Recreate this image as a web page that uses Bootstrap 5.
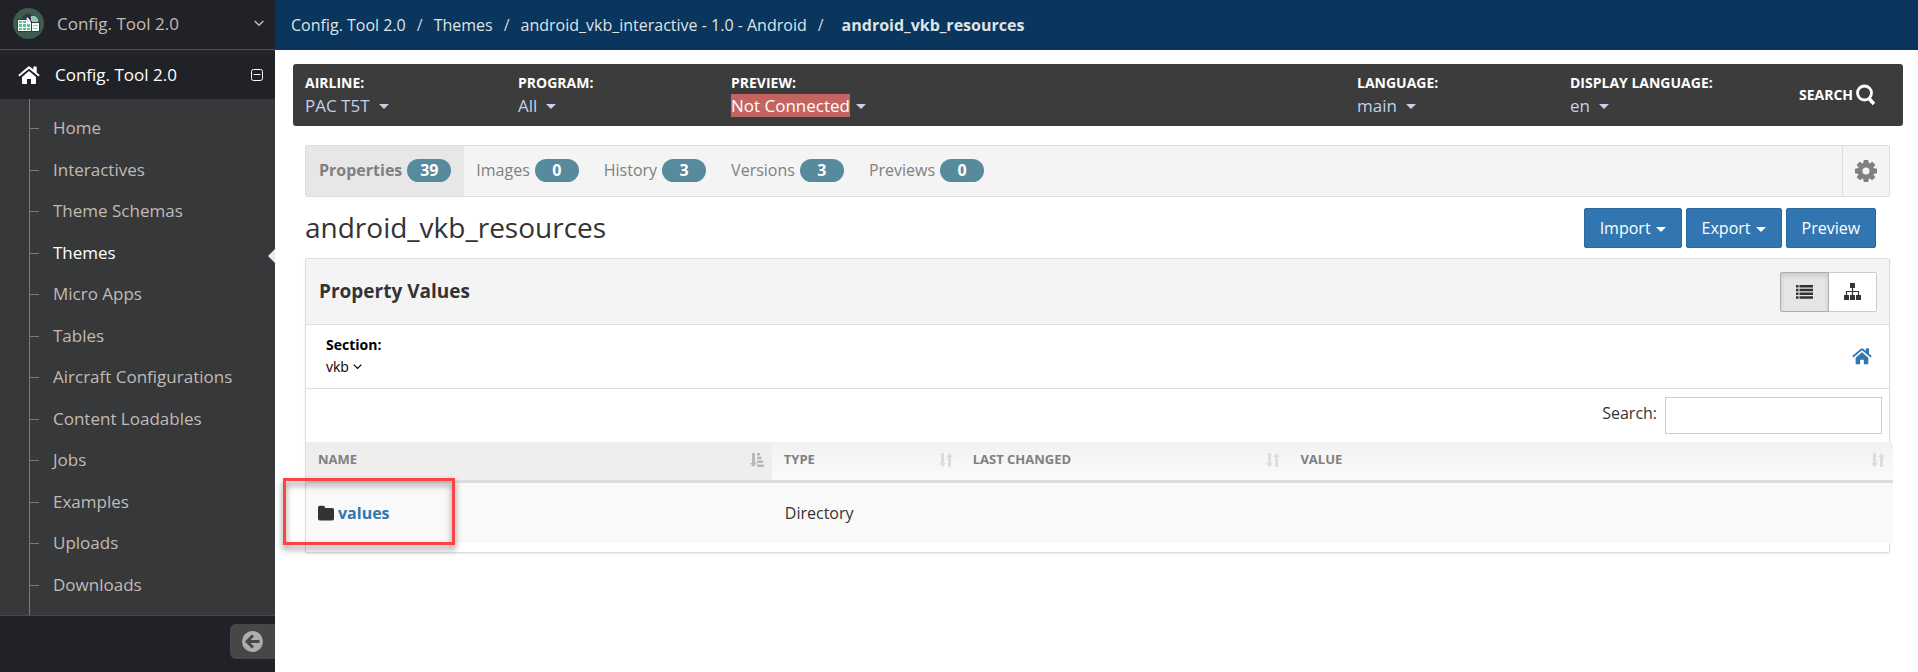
<!DOCTYPE html>
<html lang="en">
<head>
<meta charset="utf-8">
<meta name="viewport" content="width=device-width, initial-scale=1">
<title>Config. Tool 2.0 - android_vkb_resources</title>
<link href="https://cdn.jsdelivr.net/npm/bootstrap@5.3.0/dist/css/bootstrap.min.css" rel="stylesheet">
<style>
body { font-family: "Open Sans", sans-serif; font-size: 16px; line-height: 1.5; color: #333; background: #fff; }
a { text-decoration: none; }
svg { display: block; flex: none; }
button { font-family: inherit; }

/* sidebar */
.side { width: 275px; background: #212227; font-size: 17px; color: #c0bbb7; }
.side-brand { height: 50px; padding: 0 11px 2px 13px; gap: 13px; border-bottom: 1px solid #525252; color: #c0bbb7; }
.side-module { height: 49px; padding: 0 12px 4px 18px; gap: 15px; border-top: 5px solid #242529; color: #fff; }
.side-menu { background: #373839; padding: 8px 0 10px; border-bottom: 1px solid #47484b; position: relative; }
.side-menu::before { content: ""; position: absolute; left: 29px; top: 0; bottom: 0; width: 1px; background: #7a7a7a; }
.side-menu a { display: block; position: relative; padding: 8px 8px 8px 53px; color: #c0bbb7; }
.side-menu a::before { content: ""; position: absolute; left: 30px; top: 21px; width: 9px; height: 1px; background: #7a7a7a; }
.side-menu a.active { color: #fff; }
.side-menu a.active::after { content: ""; position: absolute; right: 0; top: 17px; border: 7px solid transparent; border-left: 0; border-right-color: #eaeaf0; }
.side-min { margin-top: 8px; width: 45px; height: 35px; background: #474747; border: 0; border-radius: 6px 0 0 6px; padding: 0 12px; }

/* top bar */
.top { height: 50px; background: #0a355c; padding: 0 16px; }
.top .breadcrumb { --bs-breadcrumb-divider-color: #c9d2db; --bs-breadcrumb-item-padding-x: 11px; }
.top a { color: #dfe3e8; }
.top .active { color: #dfe3e8; font-weight: 700; }
.top .active::before { font-weight: 400; padding-right: 18px; }

/* filter bar */
.filters { margin: 14px 15px 0 18px; height: 62px; padding: 8px 28px 0 12px; border-radius: 3px; background: #3c3c3c; color: #fff; }
.filter { width: 213px; }
.filter-label { font-size: 14px; font-weight: 700; line-height: 22px; }
.filter button, .find { background: none; border: 0; padding: 0; color: #c3d1ea; font-size: 17px; line-height: 24px; }
.filter button::after { margin-left: 9px; vertical-align: 3px; border-width: 5px 5px 0; }
.filter .offline { background: #c46461; color: #fff; }
.filter button.alert-state::after { margin-left: 6px; }
.find { font-size: 14px; font-weight: 700; color: #fff; margin: 0 0 8px; gap: 3px; }

.page { margin: 19px 28px 0 30px; }
.tabs { border: 1px solid #ddd; border-radius: 2px; background: #f4f4f4; height: 52px; }
.tabs .nav-link { color: #808080; padding: 0 12px 2px; gap: 5px; }
.tabs .nav-link + .nav-link { padding-right: 13px; }
.tabs .nav-link.active { background: #e7e7e7; font-weight: 700; padding-left: 13px; padding-right: 13px; }
.count { width: 44px; height: 23px; border-radius: 12px; background: #588a9d; color: #fff; font-weight: 700; line-height: 23px; text-align: center; }
.gear { width: 47px; border: 0; border-left: 1px solid #ddd; background: none; padding: 0 0 0 12px; }

.title-row { margin: 11px 14px 10px 0; }
h1 { font-size: 28px; line-height: 40px; font-weight: 400; margin: 0 0 2px; }
.btn-act { --bs-btn-bg: #3276b1; --bs-btn-color: #fff; --bs-btn-border-color: #2c699d; --bs-btn-border-radius: 2px; --bs-btn-hover-bg: #2c699d; --bs-btn-hover-color: #fff; --bs-btn-padding-x: 15px; --bs-btn-padding-y: 7px; }
.btn-act::after { margin-left: 5px; vertical-align: 2px; border-width: 5px 5px 0; }
.title-row, .title-row > div { height: 40px; }

/* panel */
.panel { border: 1px solid #ddd; border-radius: 2px; box-shadow: 0 1px 2px rgba(0,0,0,.08); padding-bottom: 9px; }
.panel-head { height: 66px; background: #f4f4f4; border-bottom: 1px solid #ddd; padding: 0 12px 0 13px; }
h2 { font-size: 19px; font-weight: 700; margin: 0; }
.btn-view { --bs-btn-bg: #fff; --bs-btn-color: #333; --bs-btn-border-color: #ccc; --bs-btn-border-radius: 2px; --bs-btn-active-bg: #e6e6e6; --bs-btn-active-color: #333; --bs-btn-active-border-color: #adadad; --bs-btn-padding-x: 15px; --bs-btn-padding-y: 0; height: 40px; }
.btn-view.active { box-shadow: inset 0 3px 5px rgba(0,0,0,.125); }
.section-row { height: 64px; border-bottom: 1px solid #ddd; padding: 0 17px 2px 20px; color: #000; font-size: 14px; line-height: 22px; }
.section-row button { border: 0; background: none; padding: 0; gap: 4px; color: #000; }
.search-row { height: 53px; padding: 8px 7px 8px 0; }
.search-row label { padding-top: 4px; }
.search-row input { width: 217px; height: 37px; border: 1px solid #ccc; padding: 0 8px; }

.props { width: calc(100% + 4px); table-layout: fixed; border-collapse: separate; border-spacing: 0; }
.props th { height: 41px; padding: 0 8px 2px 12px; font-size: 13px; color: #808080; background: linear-gradient(#f2f2f2, #fafafa); border-bottom: 3px solid #ddd; }
.props th.sorted { background: #eee; }
.props td { height: 60px; padding: 0 13px 1px; background: #f9f9f9; }
.props td a { color: #3276b1; font-weight: 700; }
.entry { margin: 0 -1px; }
.marker { position: absolute; left: -35px; top: -23px; width: 172px; height: 67px; border: 3px solid #ff4343; filter: drop-shadow(0 4px 3px rgba(0,0,0,.5)); pointer-events: none; }
</style>
</head>
<body>
<svg width="0" height="0" class="position-absolute" aria-hidden="true">
  <symbol id="i-home" viewBox="0 0 22 18"><path d="M11 5 4 11v6.200a.8.8 0 0 0 .8.8H9v-5h4v5h4.200a.8.8 0 0 0 .8-.8V11z"/><path d="m21.700 9.100-3-2.500V1a.6.600 0 0 0-.6-.6h-2.200a.6.600 0 0 0-.6.6v2.600L12.300.9a2 2 0 0 0-2.600 0L.3 9.100l1.100 1.500L11 2.800l9.600 7.800z"/></symbol>
  <symbol id="i-sort" viewBox="0 0 14 14"><path d="M2 0h3v10h2l-3.500 4L0 10h2z"/><path d="M9 14h3V4h2l-3.500-4L7 4h2z"/></symbol>
</svg>
<div class="d-flex min-vh-100">
  <aside class="side flex-shrink-0">
    <a href="#" class="side-brand d-flex align-items-center">
      <svg width="31" height="31" viewBox="0 0 31 31"><circle cx="15.500" cy="15.500" r="15.500" fill="#405c4e"/><path d="m10 8 2-1 1-2 2 1 2-1 1 2 2 1 1 3-3 3h-6l-3-3z" fill="#34384a"/><path d="M18 8h4l3 3v5h-7z" fill="#8fcdb2"/><path d="M4 11h10l2 2h3v11H4z" fill="#34384a"/><path d="M5 12h9l2 2h2v9H5z" fill="#f4faf7"/><path d="M6 13h3v2H6zM10 13h3v2h-3zM6 16h3v3H6zM10 16h3v3h-3zM14 16h3v3h-3zM6 20h3v2H6zM10 20h3v2h-3zM14 20h3v2h-3z" fill="#5fbf98"/><path d="M18 14h9v10h-9z" fill="#34384a"/><path d="M19 15h7v8h-7z" fill="#f4faf7"/><path d="M20 17.500h5M20 20.500h4" stroke="#8fcdb2"/><path d="m14 10 3 4" stroke="#fff" stroke-width="2"/></svg>
      <span class="flex-grow-1">Config. Tool 2.0</span>
      <svg width="10" height="7" viewBox="0 0 10 7" fill="none" stroke="currentColor" stroke-width="1.500"><path d="m.7 1 4.300 4.300L9.300 1"/></svg>
    </a>
    <a href="#" class="side-module d-flex align-items-center">
      <svg width="22" height="18" fill="#fff"><use href="#i-home"/></svg>
      <span class="flex-grow-1">Config. Tool 2.0</span>
      <svg width="12" height="12" viewBox="0 0 12 12" fill="none" stroke="#fff"><rect x=".5" y=".5" width="11" height="11" rx="2"/><path d="M2.500 5.500h7"/></svg>
    </a>
    <ul class="side-menu list-unstyled mb-0">
      <li><a href="#">Home</a></li>
      <li><a href="#">Interactives</a></li>
      <li><a href="#">Theme Schemas</a></li>
      <li><a href="#" class="active">Themes</a></li>
      <li><a href="#">Micro Apps</a></li>
      <li><a href="#">Tables</a></li>
      <li><a href="#">Aircraft Configurations</a></li>
      <li><a href="#">Content Loadables</a></li>
      <li><a href="#">Jobs</a></li>
      <li><a href="#">Examples</a></li>
      <li><a href="#">Uploads</a></li>
      <li><a href="#">Downloads</a></li>
    </ul>
    <div class="d-flex justify-content-end">
      <button class="side-min" aria-label="Collapse menu"><svg width="21" height="21" viewBox="0 0 21 21"><circle cx="10.500" cy="10.500" r="10.500" fill="#adadad"/><path d="M17.500 10.500H6M11 4.500l-6 6 6 6" fill="none" stroke="#474747" stroke-width="3"/></svg></button>
    </div>
  </aside>

  <main class="flex-grow-1">
    <nav class="top d-flex align-items-center" aria-label="breadcrumb">
      <ol class="breadcrumb mb-0">
        <li class="breadcrumb-item"><a href="#">Config. Tool 2.0</a></li>
        <li class="breadcrumb-item"><a href="#">Themes</a></li>
        <li class="breadcrumb-item"><a href="#">android_vkb_interactive - 1.0 - Android</a></li>
        <li class="breadcrumb-item active" aria-current="page">android_vkb_resources</li>
      </ol>
    </nav>

    <div class="filters d-flex">
      <div class="filter"><div class="filter-label">AIRLINE:</div><button class="dropdown-toggle">PAC T5T</button></div>
      <div class="filter"><div class="filter-label">PROGRAM:</div><button class="dropdown-toggle">All</button></div>
      <div class="filter"><div class="filter-label">PREVIEW:</div><button class="dropdown-toggle alert-state"><span class="offline">Not Connected</span></button></div>
      <div class="filter ms-auto"><div class="filter-label">LANGUAGE:</div><button class="dropdown-toggle">main</button></div>
      <div class="filter"><div class="filter-label">DISPLAY LANGUAGE:</div><button class="dropdown-toggle">en</button></div>
      <button class="find d-flex align-items-center ms-3">SEARCH<svg width="19" height="22" viewBox="0 0 19 22" fill="none" stroke="#fff"><circle cx="8.500" cy="9" r="7" stroke-width="2.800"/><path d="m13 14.500 5 5.500" stroke-width="3.600"/></svg></button>
    </div>

    <div class="page">
      <div class="tabs d-flex">
        <nav class="nav flex-grow-1">
          <a href="#" class="nav-link active d-flex align-items-center">Properties<span class="count">39</span></a>
          <a href="#" class="nav-link d-flex align-items-center">Images<span class="count">0</span></a>
          <a href="#" class="nav-link d-flex align-items-center">History<span class="count">3</span></a>
          <a href="#" class="nav-link d-flex align-items-center">Versions<span class="count">3</span></a>
          <a href="#" class="nav-link d-flex align-items-center">Previews<span class="count">0</span></a>
        </nav>
        <button class="gear" aria-label="Settings"><svg width="22" height="22" viewBox="-11 -11 22 22" fill="#808080"><path id="tooth" d="M-2.200-11h4.400l1 5h-6.400z"/><use href="#tooth" transform="rotate(45)"/><use href="#tooth" transform="rotate(90)"/><use href="#tooth" transform="rotate(135)"/><use href="#tooth" transform="rotate(180)"/><use href="#tooth" transform="rotate(225)"/><use href="#tooth" transform="rotate(270)"/><use href="#tooth" transform="rotate(315)"/><circle r="5.800" fill="none" stroke="#808080" stroke-width="4.500"/></svg></button>
      </div>

      <div class="title-row d-flex align-items-center justify-content-between">
        <h1>android_vkb_resources</h1>
        <div class="d-flex gap-1">
          <button class="btn btn-act dropdown-toggle">Import</button>
          <button class="btn btn-act dropdown-toggle">Export</button>
          <button class="btn btn-act">Preview</button>
        </div>
      </div>

      <section class="panel">
        <div class="panel-head d-flex align-items-center justify-content-between">
          <h2>Property Values</h2>
          <div class="btn-group">
            <button class="btn btn-view active" aria-label="List view"><svg width="17" height="14" viewBox="0 0 17 14" fill="currentColor"><path d="M0 0h2.500v2.500H0zM3.500 0H17v2.500H3.500zM0 3.700h2.500v2.500H0zM3.500 3.700H17v2.500H3.500zM0 7.500h2.500V10H0zM3.500 7.500H17V10H3.500zM0 11.300h2.500v2.500H0zM3.500 11.300H17v2.500H3.500z"/></svg></button>
            <button class="btn btn-view" aria-label="Tree view"><svg width="17" height="17" viewBox="0 0 17 17" fill="currentColor"><path d="M6 0h5v5H6zM0 12h5v5H0zM6 12h5v5H6zM12 12h5v5h-5z"/><path d="M8.500 5v7M2.500 12V8.500h12V12" fill="none" stroke="currentColor" stroke-width="1.200"/></svg></button>
          </div>
        </div>
        <div class="section-row d-flex align-items-center justify-content-between">
          <div><div class="fw-bold">Section:</div><button class="d-flex align-items-center">vkb<svg width="9" height="6" viewBox="0 0 9 6" fill="none" stroke="#000" stroke-width="1.200"><path d="m.7.7 3.800 3.800L8.300.7"/></svg></button></div>
          <a href="#" aria-label="Section root"><svg width="20" height="20" fill="#3276b1"><use href="#i-home"/></svg></a>
        </div>
        <div class="search-row d-flex justify-content-end gap-2">
          <label for="q">Search:</label><input id="q" type="search">
        </div>
        <table class="props">
          <colgroup><col style="width:29.350%"><col style="width:11.900%"><col style="width:20.650%"><col></colgroup>
          <thead><tr>
            <th class="sorted"><div class="d-flex align-items-center justify-content-between">NAME<svg width="14" height="14" viewBox="0 0 14 14" fill="#b8b8b8"><path d="M2 0h3v10h2l-3.500 4L0 10h2zM7 0h3v2.500H7zM7 3.800h4.500v2.500H7zM7 7.500h6V10H7zM7 11.500h7V14H7z"/></svg></div></th>
            <th><div class="d-flex align-items-center justify-content-between">TYPE<svg width="14" height="14" fill="#ddd"><use href="#i-sort"/></svg></div></th>
            <th><div class="d-flex align-items-center justify-content-between">LAST CHANGED<svg width="14" height="14" fill="#ddd"><use href="#i-sort"/></svg></div></th>
            <th><div class="d-flex align-items-center justify-content-between">VALUE<svg width="14" height="14" fill="#ddd"><use href="#i-sort"/></svg></div></th>
          </tr></thead>
          <tbody><tr>
            <td><div class="entry position-relative d-flex align-items-center gap-1"><svg width="16" height="16" viewBox="0 0 16 16" fill="#333"><path d="M0 2.500A1.700 1.700 0 0 1 1.700.8h3.600A1.700 1.700 0 0 1 7 2.500V3h7.300A1.700 1.700 0 0 1 16 4.700v9a1.700 1.700 0 0 1-1.700 1.700H1.700A1.700 1.700 0 0 1 0 13.700z"/></svg><a href="#">values</a><span class="marker"></span></div></td>
            <td>Directory</td><td></td><td></td>
          </tr></tbody>
        </table>
      </section>
    </div>
  </main>
</div>
<script src="https://cdn.jsdelivr.net/npm/bootstrap@5.3.0/dist/js/bootstrap.bundle.min.js"></script>
</body>
</html>
